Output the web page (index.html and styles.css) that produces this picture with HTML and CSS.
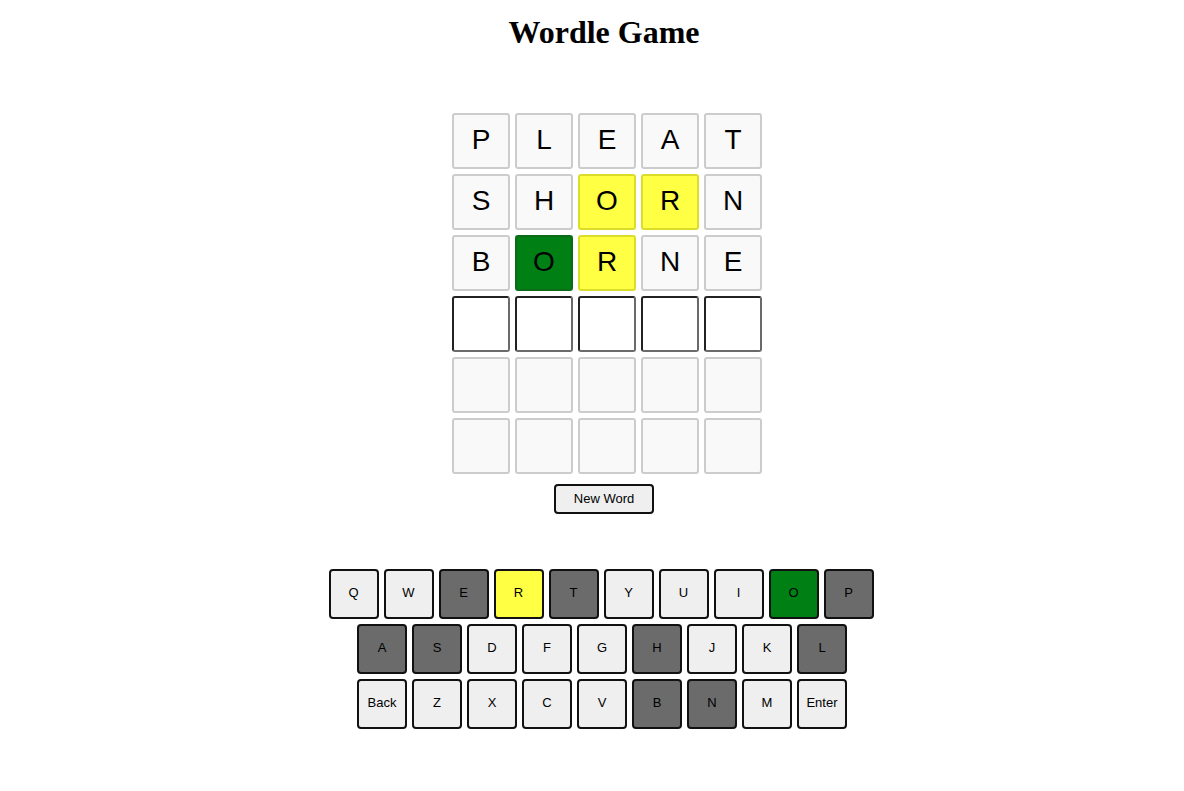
FILE: index.html
```html
<!DOCTYPE html>
<html>
<head>
<meta charset="utf-8">
<title>Wordle Game</title>
<link rel="stylesheet" href="styles.css">
</head>
<body>
<div class="page">
  <h1 class="title">Wordle Game</h1>
  <div class="board">
    <div class="row">
      <div class="tile">P</div><div class="tile">L</div><div class="tile">E</div><div class="tile">A</div><div class="tile">T</div>
    </div>
    <div class="row">
      <div class="tile">S</div><div class="tile">H</div><div class="tile present">O</div><div class="tile present">R</div><div class="tile">N</div>
    </div>
    <div class="row">
      <div class="tile">B</div><div class="tile correct">O</div><div class="tile present">R</div><div class="tile">N</div><div class="tile">E</div>
    </div>
    <div class="row">
      <div class="tile active"></div><div class="tile active"></div><div class="tile active"></div><div class="tile active"></div><div class="tile active"></div>
    </div>
    <div class="row">
      <div class="tile"></div><div class="tile"></div><div class="tile"></div><div class="tile"></div><div class="tile"></div>
    </div>
    <div class="row">
      <div class="tile"></div><div class="tile"></div><div class="tile"></div><div class="tile"></div><div class="tile"></div>
    </div>
  </div>
  <button class="new-word">New Word</button>
  <div class="keyboard">
    <div class="krow krow-top">
      <button class="key">Q</button><button class="key">W</button><button class="key absent">E</button><button class="key present">R</button><button class="key absent">T</button><button class="key">Y</button><button class="key">U</button><button class="key">I</button><button class="key correct">O</button><button class="key absent">P</button>
    </div>
    <div class="krow">
      <button class="key absent">A</button><button class="key absent">S</button><button class="key">D</button><button class="key">F</button><button class="key">G</button><button class="key absent">H</button><button class="key">J</button><button class="key">K</button><button class="key absent">L</button>
    </div>
    <div class="krow">
      <button class="key">Back</button><button class="key">Z</button><button class="key">X</button><button class="key">C</button><button class="key">V</button><button class="key absent">B</button><button class="key absent">N</button><button class="key">M</button><button class="key">Enter</button>
    </div>
  </div>
</div>
</body>
</html>
```

FILE: styles.css
```css
html, body {
  margin: 0;
  padding: 0;
  background: #ffffff;
}

.page {
  padding-left: 24px;
  display: flex;
  flex-direction: column;
  align-items: center;
}

.title {
  font-family: "Liberation Serif", "Times New Roman", serif;
  font-size: 32px;
  font-weight: bold;
  margin: 14px 0 0;
  line-height: 37px;
  color: #000;
}

.board {
  margin-top: 62px;
  padding-left: 6px;
  display: flex;
  flex-direction: column;
  gap: 5px;
}

.row {
  display: flex;
  gap: 5px;
}

.tile {
  box-sizing: border-box;
  width: 58px;
  height: 56px;
  border: 2px solid #cccccc;
  border-radius: 3px;
  background: #f9f9f9;
  display: flex;
  align-items: center;
  justify-content: center;
  padding-bottom: 2px;
  font-family: "Liberation Sans", Arial, sans-serif;
  font-size: 28px;
  color: #000;
}

.tile.present {
  background: #ffff44;
  border-color: #dcdc2a;
}

.tile.correct {
  background: #008014;
  border-color: #0b6b18;
}

.tile.active {
  background: #ffffff;
  border-color: #222222 #6a6a6a #6a6a6a #222222;
}

.new-word {
  box-sizing: border-box;
  margin-top: 10px;
  width: 100px;
  height: 30px;
  border: 2px solid #111;
  border-radius: 4px;
  background: #efefef;
  font-family: "Liberation Sans", Arial, sans-serif;
  font-size: 13px;
  color: #000;
  padding: 0 0 2px;
}

.keyboard {
  margin-top: 55px;
  padding-right: 4px;
  display: flex;
  flex-direction: column;
  align-items: center;
  gap: 5px;
}

.krow {
  display: flex;
  gap: 5px;
}

.krow-top {
  padding-right: 2px;
}

.key {
  box-sizing: border-box;
  width: 50px;
  height: 50px;
  border: 2px solid #111;
  border-radius: 4px;
  background: #efefef;
  font-family: "Liberation Sans", Arial, sans-serif;
  font-size: 13px;
  color: #000;
  padding: 0 0 3px;
}

.key.absent {
  background: #6b6b6b;
}

.key.present {
  background: #ffff44;
}

.key.correct {
  background: #008014;
}
```
